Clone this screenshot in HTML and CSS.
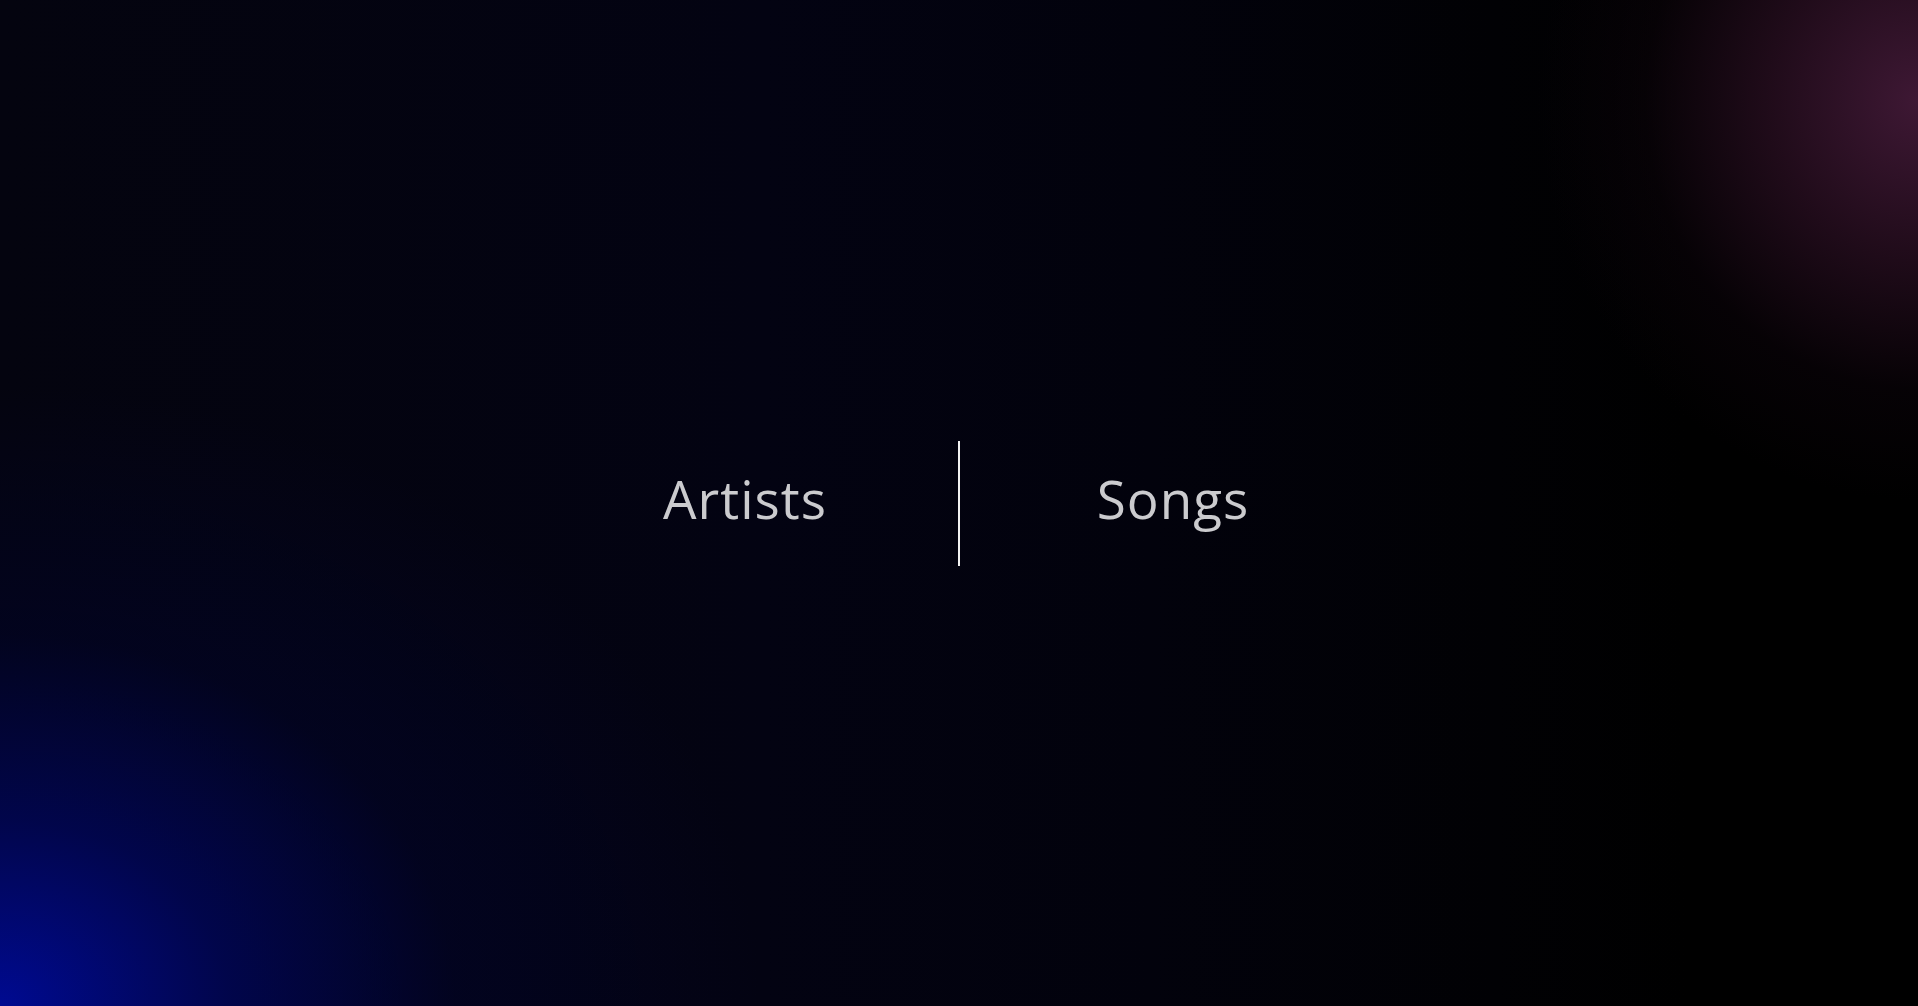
FILE: index.html
```html
<!DOCTYPE html>
<html lang="en">
<head>
<meta charset="utf-8">
<title>Artists | Songs</title>
<link rel="stylesheet" href="styles.css">
</head>
<body>
<main class="stage">
  <nav class="choice">
    <a class="choice-item" href="#artists">Artists</a>
    <span class="divider"></span>
    <a class="choice-item" href="#songs">Songs</a>
  </nav>
</main>
</body>
</html>
```

FILE: styles.css
```css
html, body {
  margin: 0;
  padding: 0;
  height: 100%;
}

body {
  background-color: #020208;
  background-image:
    radial-gradient(ellipse 380px 400px at 100% 10%, rgba(62, 24, 52, 1) 0%, rgba(42, 15, 34, 0.78) 38%, rgba(16, 5, 14, 0.38) 72%, rgba(0, 0, 0, 0) 100%),
    radial-gradient(ellipse 760px 620px at 0% 100%, rgba(0, 10, 145, 1) 0%, rgba(0, 6, 95, 0.75) 30%, rgba(0, 3, 50, 0.42) 60%, rgba(0, 1, 24, 0) 100%),
    linear-gradient(to right, #04040f 0%, #030312 40%, #02020c 60%, #010104 78%, #000000 88%, #000000 100%);
  background-repeat: no-repeat;
  font-family: "Open Sans", "Noto Sans", sans-serif;
}

.stage {
  height: 100%;
  display: flex;
  align-items: center;
  justify-content: center;
}

.choice {
  display: flex;
  align-items: center;
}

.choice-item {
  width: 426px;
  text-align: center;
  color: #cbcbce;
  text-decoration: none;
  font-size: 53px;
  font-weight: 500;
  letter-spacing: 1px;
  line-height: 1;
  padding-bottom: 9px;
}

.divider {
  width: 2px;
  height: 125px;
  background: #f2f2f2;
}
```
